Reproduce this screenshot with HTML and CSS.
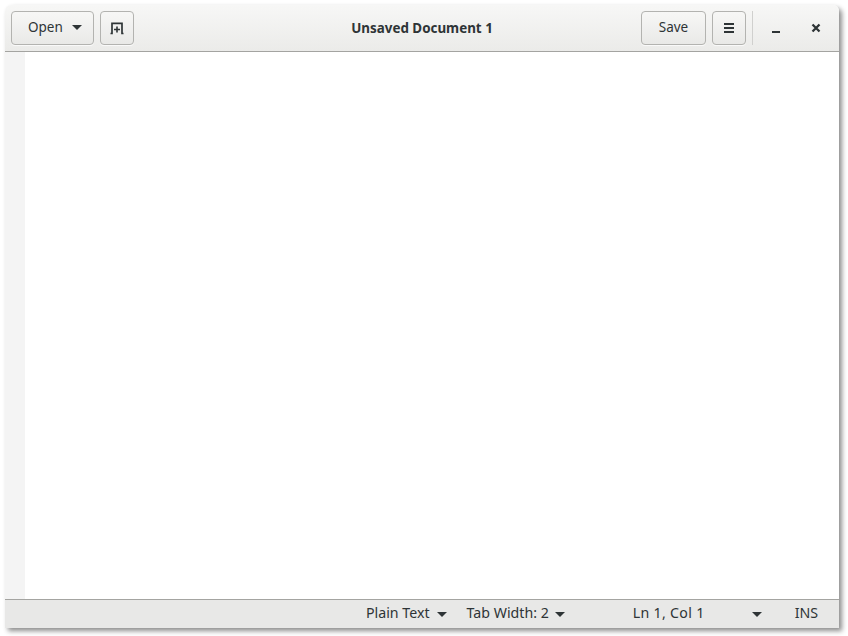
FILE: index.html
```html
<!DOCTYPE html>
<html lang="en">
<head>
<meta charset="utf-8">
<title>Unsaved Document 1</title>
<link rel="stylesheet" href="styles.css">
</head>
<body>
<div class="window">
  <header class="headerbar">
    <div class="group">
      <button class="btn btn-open"><span>Open</span><i class="caret"></i></button>
      <button class="btn btn-icon" aria-label="New tab">
        <svg width="16" height="16" viewBox="0 0 16 16"><path class="line" d="M1.500 13.500H3V3.400h10v10.100h1.500"/><path class="ink" d="M7.200 6.500h1.600v2.200H11v1.600H8.800v2.200H7.200v-2.200H5V8.700h2.200z"/></svg>
      </button>
    </div>
    <div class="title">Unsaved Document 1</div>
    <div class="group">
      <button class="btn btn-save"><span>Save</span></button>
      <button class="btn btn-icon" aria-label="Menu">
        <svg width="16" height="16" viewBox="0 0 16 16"><path class="ink" d="M3 3h10v2H3zM3 7h10v2H3zM3 11h10v2H3z"/></svg>
      </button>
      <div class="sep"></div>
      <button class="wm" aria-label="Minimize">
        <svg width="16" height="16" viewBox="0 0 16 16"><path class="ink" d="M4 11h8v2H4z"/></svg>
      </button>
      <button class="wm" aria-label="Close">
        <svg width="16" height="16" viewBox="0 0 16 16"><path class="line line-x" d="M4.500 4.500l7 7M11.500 4.500l-7 7"/></svg>
      </button>
    </div>
  </header>
  <main class="editor"><div class="gutter"></div><div class="text"></div></main>
  <footer class="statusbar">
    <span class="st st-lang">Plain Text<i class="caret"></i></span>
    <span class="st st-tab">Tab Width: 2<i class="caret"></i></span>
    <span class="st st-pos">Ln 1, Col 1</span>
    <i class="caret"></i>
    <span class="st st-ins">INS</span>
  </footer>
</div>
</body>
</html>
```
FILE: styles.css
```css
* { box-sizing: border-box; }
html, body { margin: 0; height: 100%; background: #fff; }
body { padding: 5px 9px 8px 5px; font-family: "Noto Sans", sans-serif; font-size: 13.5px; color: #2e3436; }
.window {
  height: 623px;
  display: flex;
  flex-direction: column;
  border-radius: 6px 6px 0 0;
  box-shadow: 3px 3px 5px rgba(0,0,0,.45);
  overflow: hidden;
  background: #fff;
}
.headerbar {
  height: 47px;
  flex: none;
  display: flex;
  align-items: center;
  justify-content: space-between;
  padding: 0 6px;
  background: linear-gradient(#f7f7f6, #ebebe9);
  border-bottom: 1px solid #a4a4a1;
  position: relative;
}
.group { display: flex; align-items: center; gap: 6px; }
.btn {
  height: 34px;
  font: inherit;
  color: inherit;
  display: flex;
  align-items: center;
  justify-content: center;
  padding: 0 0 2px;
  border: 1px solid #b3b3b0;
  border-radius: 4px;
  background: linear-gradient(#f7f7f6, #e9e9e7);
  box-shadow: 0 1px 0 rgba(255,255,255,.7);
}
.btn-open { width: 83px; gap: 9px; justify-content: flex-start; padding-left: 16px; }
.btn-icon { width: 34px; padding: 0; }
.btn-save { width: 65px; }
.ink { fill: #2e3436; }
.line { fill: none; stroke: #2e3436; stroke-width: 1.7; }
.line-x { stroke-width: 2.3; }
.caret {
  display: inline-block;
  flex: none;
  width: 0; height: 0;
  border-left: 5px solid transparent;
  border-right: 5px solid transparent;
  border-top: 5px solid #2e3436;
}
.title {
  position: absolute;
  left: 0; right: 0;
  text-align: center;
  top: 14px;
  font-weight: 700;
  font-size: 13.4px;
  pointer-events: none;
}
.sep { width: 1px; height: 34px; background: #d0d0ce; }
.wm {
  width: 34px;
  height: 34px;
  padding: 0;
  border: 0;
  background: none;
  display: flex;
  align-items: center;
  justify-content: center;
}
.editor { flex: 1; display: flex; min-height: 0; }
.gutter { width: 20px; background: #f4f4f4; }
.text { flex: 1; background: #fff; }
.statusbar {
  height: 29px;
  flex: none;
  display: flex;
  align-items: center;
  background: #e8e8e7;
  border-top: 1px solid #a4a4a1;
  padding: 0 0 3px 361px;
  font-size: 14.2px;
}
.statusbar .caret { margin-top: 3px; }
.st { display: inline-flex; align-items: center; gap: 6px; white-space: nowrap; }
.st-lang { gap: 7px; }
.st-tab { margin-left: 20px; }
.st-pos { margin-left: 68px; width: 119px; letter-spacing: .3px; }
.st-ins { margin-left: 33px; }
```
